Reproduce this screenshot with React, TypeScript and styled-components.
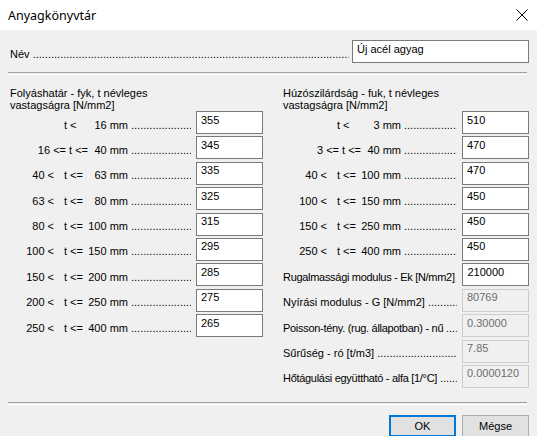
import styled, { createGlobalStyle } from 'styled-components';

const FONT = '"Liberation Sans", Arial, sans-serif';

const GlobalStyle = createGlobalStyle`
  html, body {
    margin: 0;
    padding: 0;
    background: #f0f0f0;
  }
  body {
    font-family: ${FONT};
    font-size: 11px;
    color: #000;
  }
`;

const Window = styled.div`
  width: 537px;
  height: 436px;
  display: flex;
  flex-direction: column;
  background: #f0f0f0;
  overflow: hidden;
`;

const TitleBar = styled.div`
  height: 30px;
  flex-shrink: 0;
  display: flex;
  align-items: center;
  justify-content: space-between;
  background: #fff;
  padding-left: 8px;
  font-family: "Noto Sans", sans-serif;
  font-size: 12.5px;
  color: #000;
`;

const CloseButton = styled.div`
  width: 30px;
  height: 30px;
  display: flex;
  align-items: center;
  justify-content: center;
`;

const Body = styled.div`
  display: flex;
  flex-direction: column;
  padding: 10px 8px 0 8px;
`;

const NameRow = styled.div`
  display: flex;
  align-items: center;
  height: 23px;
  padding-left: 2px;
`;

const Label = styled.span<{ $tight?: boolean }>`
  white-space: nowrap;
  flex-shrink: 0;
  padding-top: 4px;
  line-height: 12px;
  letter-spacing: ${(p) => (p.$tight ? '-0.3px' : 'normal')};
`;

const Dots = styled.span<{ $gap?: number }>`
  flex: 1;
  min-width: 0;
  overflow: hidden;
  white-space: nowrap;
  padding-top: 4px;
  line-height: 12px;
  margin-right: ${(p) => p.$gap ?? 5}px;
  &::before {
    content: '${'.'.repeat(200)}';
  }
`;

const Field = styled.input<{ $width?: number }>`
  width: ${(p) => p.$width ?? 67}px;
  height: 23px;
  box-sizing: border-box;
  flex-shrink: 0;
  margin: 0;
  border: 1px solid #7a7a7a;
  background: #fff;
  padding: 0 4px 6px 4px;
  font-family: ${FONT};
  font-size: 11px;
  color: #000;
  outline: none;
  &:disabled {
    border-color: #cccccc;
    background: #f0f0f0;
    color: #6d6d6d;
  }
`;

const Separator = styled.div<{ $top: number }>`
  margin-top: ${(p) => p.$top}px;
  margin-right: 2px;
  height: 1px;
  border-top: 1px solid #a0a0a0;
  border-bottom: 1px solid #ffffff;
`;

const Columns = styled.div`
  display: grid;
  grid-template-columns: 255px 248px;
  column-gap: 18px;
  align-items: start;
`;

const Column = styled.div`
  display: flex;
  flex-direction: column;
`;

const Header = styled.div`
  margin-top: 12px;
  padding-left: 2px;
  line-height: 12px;
`;

const Rows = styled.div`
  display: flex;
  flex-direction: column;
  gap: 2.4px;
`;

const Row = styled.div`
  display: flex;
  align-items: center;
  height: 23px;
  padding-left: 2px;
`;

const Range = styled.span`
  display: grid;
  grid-template-columns: 44px 10px 24px 40px;
  padding-top: 4px;
  margin-right: 3px;
  line-height: 12px;
  white-space: nowrap;
  flex-shrink: 0;
`;

const Bound = styled.span<{ $span?: boolean }>`
  grid-column: ${(p) => (p.$span ? '1 / 4' : '1 / 2')};
  justify-self: end;
`;

const Op = styled.span`
  grid-column: 3 / 4;
`;

const Upper = styled.span`
  grid-column: 4 / 5;
  justify-self: end;
`;

const Footer = styled.div`
  display: flex;
  justify-content: flex-end;
  gap: 6px;
  margin-top: 10px;
`;

const Button = styled.button<{ $default?: boolean }>`
  width: 67px;
  height: 22px;
  margin: 0;
  padding: 0;
  box-sizing: border-box;
  background: #e1e1e1;
  border: 1px solid ${(p) => (p.$default ? '#0078d7' : '#adadad')};
  box-shadow: ${(p) => (p.$default ? 'inset 0 0 0 1px #0078d7' : 'none')};
  font-family: ${FONT};
  font-size: 11px;
  color: #000;
`;

type RangeRow = { lower?: string; op: string; upper: string; value: string; joined?: boolean };

const yieldRows: RangeRow[] = [
  { op: 't <', upper: '16 mm', value: '355' },
  { lower: '16 <= t <=', op: '', upper: '40 mm', value: '345', joined: true },
  { lower: '40 <', op: 't <=', upper: '63 mm', value: '335' },
  { lower: '63 <', op: 't <=', upper: '80 mm', value: '325' },
  { lower: '80 <', op: 't <=', upper: '100 mm', value: '315' },
  { lower: '100 <', op: 't <=', upper: '150 mm', value: '295' },
  { lower: '150 <', op: 't <=', upper: '200 mm', value: '285' },
  { lower: '200 <', op: 't <=', upper: '250 mm', value: '275' },
  { lower: '250 <', op: 't <=', upper: '400 mm', value: '265' },
];

const tensileRows: RangeRow[] = [
  { op: 't <', upper: '3 mm', value: '510' },
  { lower: '3 <= t <=', op: '', upper: '40 mm', value: '470', joined: true },
  { lower: '40 <', op: 't <=', upper: '100 mm', value: '470' },
  { lower: '100 <', op: 't <=', upper: '150 mm', value: '450' },
  { lower: '150 <', op: 't <=', upper: '250 mm', value: '450' },
  { lower: '250 <', op: 't <=', upper: '400 mm', value: '450' },
];

const props = [
  { label: 'Rugalmassági modulus - Ek [N/mm2]', value: '210000', disabled: false, tight: true },
  { label: 'Nyírási modulus - G [N/mm2]', value: '80769', disabled: true },
  { label: 'Poisson-tény. (rug. állapotban) - nű', value: '0.30000', disabled: true, tight: true },
  { label: 'Sűrűség - ró [t/m3]', value: '7.85', disabled: true },
  { label: 'Hőtágulási együttható - alfa [1/°C]', value: '0.0000120', disabled: true, tight: true },
];

function RangeLine({ row }: { row: RangeRow }) {
  return (
    <Row>
      <Range>
        {row.lower && <Bound $span={row.joined}>{row.lower}</Bound>}
        {row.op && <Op>{row.op}</Op>}
        <Upper>{row.upper}</Upper>
      </Range>
      <Dots>&nbsp;</Dots>
      <Field defaultValue={row.value} />
    </Row>
  );
}

export default function App() {
  return (
    <>
      <GlobalStyle />
      <Window>
        <TitleBar>
          <span>Anyagkönyvtár</span>
          <CloseButton>
            <svg width="12" height="12" viewBox="0 0 12 12">
              <path d="M0.5 0.5 L11.5 11.5 M11.5 0.5 L0.5 11.5" stroke="#000" strokeWidth="1" fill="none" />
            </svg>
          </CloseButton>
        </TitleBar>
        <Body>
          <NameRow>
            <Label>Név&nbsp;</Label>
            <Dots $gap={3}>&nbsp;</Dots>
            <Field $width={177} defaultValue="Új acél agyag" />
          </NameRow>
          <Separator $top={9} />
          <Columns>
            <Column>
              <Header>
                Folyáshatár - fyk, t névleges
                <br />
                vastagságra [N/mm2]
              </Header>
              <Rows>
                {yieldRows.map((r) => (
                  <RangeLine key={r.value + r.upper} row={r} />
                ))}
              </Rows>
            </Column>
            <Column>
              <Header>
                Húzószilárdság - fuk, t névleges
                <br />
                vastagságra [N/mm2]
              </Header>
              <Rows>
                {tensileRows.map((r) => (
                  <RangeLine key={r.value + r.upper} row={r} />
                ))}
                {props.map((p) => (
                  <Row key={p.label}>
                    <Label $tight={p.tight}>{p.label}&nbsp;</Label>
                    <Dots>&nbsp;</Dots>
                    <Field defaultValue={p.value} disabled={p.disabled} />
                  </Row>
                ))}
              </Rows>
            </Column>
          </Columns>
          <Separator $top={14} />
          <Footer>
            <Button $default>OK</Button>
            <Button>Mégse</Button>
          </Footer>
        </Body>
      </Window>
    </>
  );
}
